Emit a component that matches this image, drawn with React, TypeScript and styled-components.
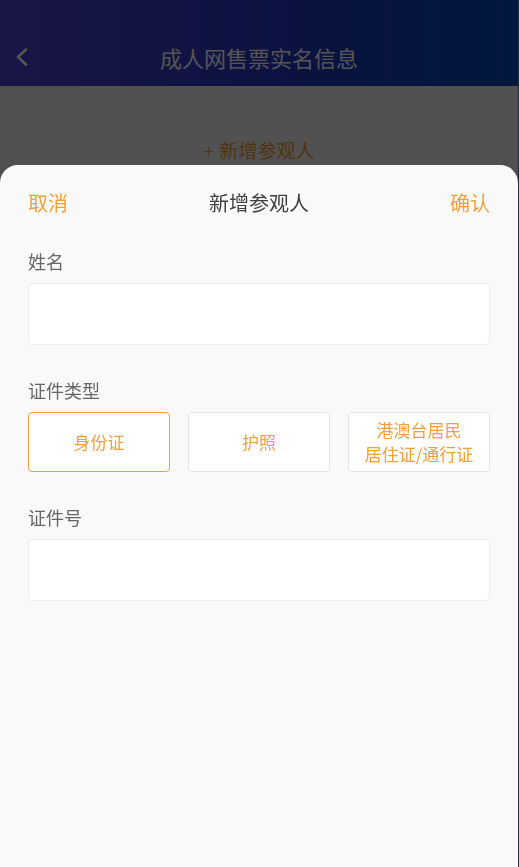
import React, { useState } from "react";
import styled, { createGlobalStyle } from "styled-components";

const Global = createGlobalStyle`
  html { background: #2a2940; }
  body {
    margin: 0;
    font-family: "Noto Sans CJK SC", "Noto Sans", "Liberation Sans", sans-serif;
    -webkit-font-smoothing: antialiased;
  }
  #root { width: calc(100% - 1px); }
  * { box-sizing: border-box; }
`;

const Page = styled.div`
  min-height: 100vh;
  background: #f2f2f2;
`;

const NavBar = styled.header`
  height: 86px;
  padding-top: 28px;
  background: linear-gradient(90deg, #4f44d8 0%, #2437c4 55%, #044aba 100%);
  display: grid;
  grid-template-columns: 60px 1fr 60px;
  align-items: center;
`;

const BackButton = styled.button`
  border: 0;
  background: transparent;
  padding: 0 0 0 14px;
  height: 100%;
  display: flex;
  align-items: center;
  cursor: pointer;
`;

const NavTitle = styled.h1`
  margin: 0;
  text-align: center;
  color: #ffffff;
  font-size: 22px;
  font-weight: 400;
  line-height: 30px;
`;

const Content = styled.main`
  padding: 34px 14px 0;
`;

const AddCard = styled.div`
  height: 62px;
  border-radius: 8px;
  background: #f6f6f6;
  box-shadow: 0 0 5px rgba(0, 0, 0, 0.05);
  display: flex;
  align-items: center;
  justify-content: center;
  color: #f59a32;
  font-size: 19px;
  gap: 6px;
  padding-bottom: 4px;
`;

const Plus = styled.span`
  font-weight: 300;
`;

const Mask = styled.div`
  position: fixed;
  top: 0;
  left: 0;
  right: 1px;
  bottom: 0;
  background: rgba(0, 0, 0, 0.67);
`;

const Sheet = styled.section`
  position: fixed;
  left: 0;
  right: 1px;
  bottom: 0;
  height: 702px;
  background: #f9f9f9;
  border-radius: 18px 18px 0 0;
  overflow: hidden;
`;

const SheetHeader = styled.div`
  height: 76px;
  padding: 0 28px;
  display: flex;
  align-items: center;
  justify-content: space-between;
  font-size: 20px;
  line-height: 28px;
`;

const Action = styled.button`
  border: 0;
  padding: 0;
  background: transparent;
  font: inherit;
  color: #f0a03c;
  cursor: pointer;
`;

const SheetTitle = styled.div`
  color: #404040;
`;

const SheetBody = styled.div`
  padding: 8px 28px 0;
  display: flex;
  flex-direction: column;
  gap: 33px;
`;

const Field = styled.div`
  display: flex;
  flex-direction: column;
  gap: 10px;
`;

const Label = styled.label`
  font-size: 18px;
  line-height: 24px;
  color: #666666;
`;

const Input = styled.input`
  height: 62px;
  width: 100%;
  border: 1px solid #ededed;
  border-radius: 4px;
  background: #ffffff;
  padding: 0 14px;
  font-size: 18px;
  font-family: inherit;
  outline: none;
`;

const TypeGrid = styled.div`
  display: grid;
  grid-template-columns: repeat(3, 1fr);
  gap: 18px;
`;

const TypeButton = styled.button<{ $active?: boolean }>`
  height: 60px;
  border: 1px solid ${(p) => (p.$active ? "#f0a03c" : "#e4e4e4")};
  border-radius: 4px;
  background: #ffffff;
  color: #f0a03c;
  font-family: inherit;
  font-size: 17px;
  line-height: 24px;
  padding: 0 4px;
  display: flex;
  flex-direction: column;
  align-items: center;
  justify-content: center;
  text-align: center;
  cursor: pointer;
`;

const TypeLine = styled.span`
  display: block;
  white-space: nowrap;
`;

const types = [["身份证"], ["护照"], ["港澳台居民", "居住证/通行证"]];

export default function App() {
  const [active, setActive] = useState(0);
  return (
    <>
      <Global />
      <Page>
        <NavBar>
          <BackButton aria-label="返回">
            <svg width="16" height="20" viewBox="0 0 16 20">
              <polyline
                points="12,2.5 4,10 12,17.5"
                fill="none"
                stroke="#ffffff"
                strokeWidth="2.6"
                strokeLinecap="round"
                strokeLinejoin="round"
              />
            </svg>
          </BackButton>
          <NavTitle>成人网售票实名信息</NavTitle>
          <div />
        </NavBar>
        <Content>
          <AddCard>
            <Plus>+</Plus>
            <span>新增参观人</span>
          </AddCard>
        </Content>
      </Page>
      <Mask />
      <Sheet>
        <SheetHeader>
          <Action>取消</Action>
          <SheetTitle>新增参观人</SheetTitle>
          <Action>确认</Action>
        </SheetHeader>
        <SheetBody>
          <Field>
            <Label>姓名</Label>
            <Input />
          </Field>
          <Field>
            <Label>证件类型</Label>
            <TypeGrid>
              {types.map((lines, i) => (
                <TypeButton key={lines[0]} $active={i === active} onClick={() => setActive(i)}>
                  {lines.map((line) => (
                    <TypeLine key={line}>{line}</TypeLine>
                  ))}
                </TypeButton>
              ))}
            </TypeGrid>
          </Field>
          <Field>
            <Label>证件号</Label>
            <Input />
          </Field>
        </SheetBody>
      </Sheet>
    </>
  );
}
